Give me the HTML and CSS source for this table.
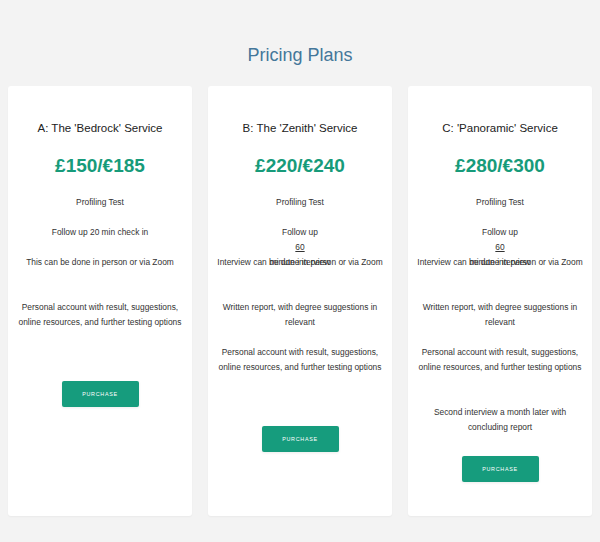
FILE: index.html
```html
<!DOCTYPE html>
<html lang="en">
<head>
    <meta charset="UTF-8">
    <meta name="viewport" content="width=device-width, initial-scale=1.0">
    <title>Pricing Plans</title>
    <link rel="stylesheet" href="styles.css">
</head>
<body>
    <h1 class="page-title">Pricing Plans</h1>

    <div class="plans">
        <div class="plan">
            <h2 class="plan-name">A: The 'Bedrock' Service</h2>
            <div class="plan-price">£150/€185</div>
            <ul class="plan-features">
                <li>Profiling Test</li>
                <li>Follow up 20 min check in</li>
                <li>This can be done in person or via Zoom</li>
                <li class="spacer"></li>
                <li>Personal account with result, suggestions, online resources, and further testing options</li>
                <li class="spacer-line">&nbsp;</li>
            </ul>
            <button class="buy-btn">Purchase</button>
        </div>

        <div class="plan">
            <h2 class="plan-name">B: The 'Zenith' Service</h2>
            <div class="plan-price">£220/€240</div>
            <ul class="plan-features">
                <li>Profiling Test</li>
                <li class="squashed">
                    <span>Follow up</span>
                    <span class="link">60</span>
                    <span>minute interview</span>
                </li>
                <li>Interview can be done in person or via Zoom</li>
                <li class="spacer"></li>
                <li>Written report, with degree suggestions in relevant</li>
                <li>Personal account with result, suggestions, online resources, and further testing options</li>
                <li class="spacer-line">&nbsp;</li>
            </ul>
            <button class="buy-btn">Purchase</button>
        </div>

        <div class="plan">
            <h2 class="plan-name">C: 'Panoramic' Service</h2>
            <div class="plan-price">£280/€300</div>
            <ul class="plan-features">
                <li>Profiling Test</li>
                <li class="squashed">
                    <span>Follow up</span>
                    <span class="link">60</span>
                    <span>minute interview</span>
                </li>
                <li>Interview can be done in person or via Zoom</li>
                <li class="spacer"></li>
                <li>Written report, with degree suggestions in relevant</li>
                <li>Personal account with result, suggestions, online resources, and further testing options</li>
                <li class="spacer"></li>
                <li>Second interview a month later with concluding report</li>
            </ul>
            <button class="buy-btn">Purchase</button>
        </div>
    </div>
</body>
</html>
```

FILE: styles.css
```css
* {
    margin: 0;
    padding: 0;
    box-sizing: border-box;
}

body {
    font-family: 'Liberation Sans', Arial, Helvetica, sans-serif;
    background: #f3f3f3;
    color: #333;
}

.page-title {
    margin-top: 43px;
    font-size: 18px;
    line-height: 24px;
    font-weight: 300;
    text-align: center;
    color: #44779a;
}

.plans {
    display: flex;
    gap: 16px;
    padding: 19px 8px 26px;
}

.plan {
    flex: 1;
    background: #fff;
    border-radius: 3px;
    box-shadow: 0 1px 2px rgba(0, 0, 0, 0.04);
    padding: 34px 8px;
    text-align: center;
}

.plan-name {
    font-size: 11.5px;
    line-height: 16px;
    font-weight: normal;
    color: #222;
}

.plan-price {
    margin-top: 18px;
    font-size: 19px;
    line-height: 24px;
    font-weight: bold;
    color: #179b7a;
}

.plan-features {
    list-style: none;
    margin-top: 16.5px;
    font-size: 8.4px;
    line-height: 15px;
}

.plan-features li {
    margin-bottom: 15px;
}

/* empty row: adds one extra gap */
.plan-features .spacer {
    height: 15px;
    margin-bottom: 0;
}

.plan-features .squashed {
    height: 15px;
}

.squashed span {
    display: block;
}

.squashed .link {
    text-decoration: underline;
}

.buy-btn {
    display: block;
    width: 77px;
    height: 26px;
    margin: 21px auto 0;
    background: #169c7d;
    color: #fff;
    border: none;
    border-radius: 2px;
    box-shadow: 0 1px 3px rgba(0, 0, 0, 0.08);
    font-family: inherit;
    font-size: 5.4px;
    letter-spacing: 0.7px;
    text-transform: uppercase;
    cursor: pointer;
}
```
